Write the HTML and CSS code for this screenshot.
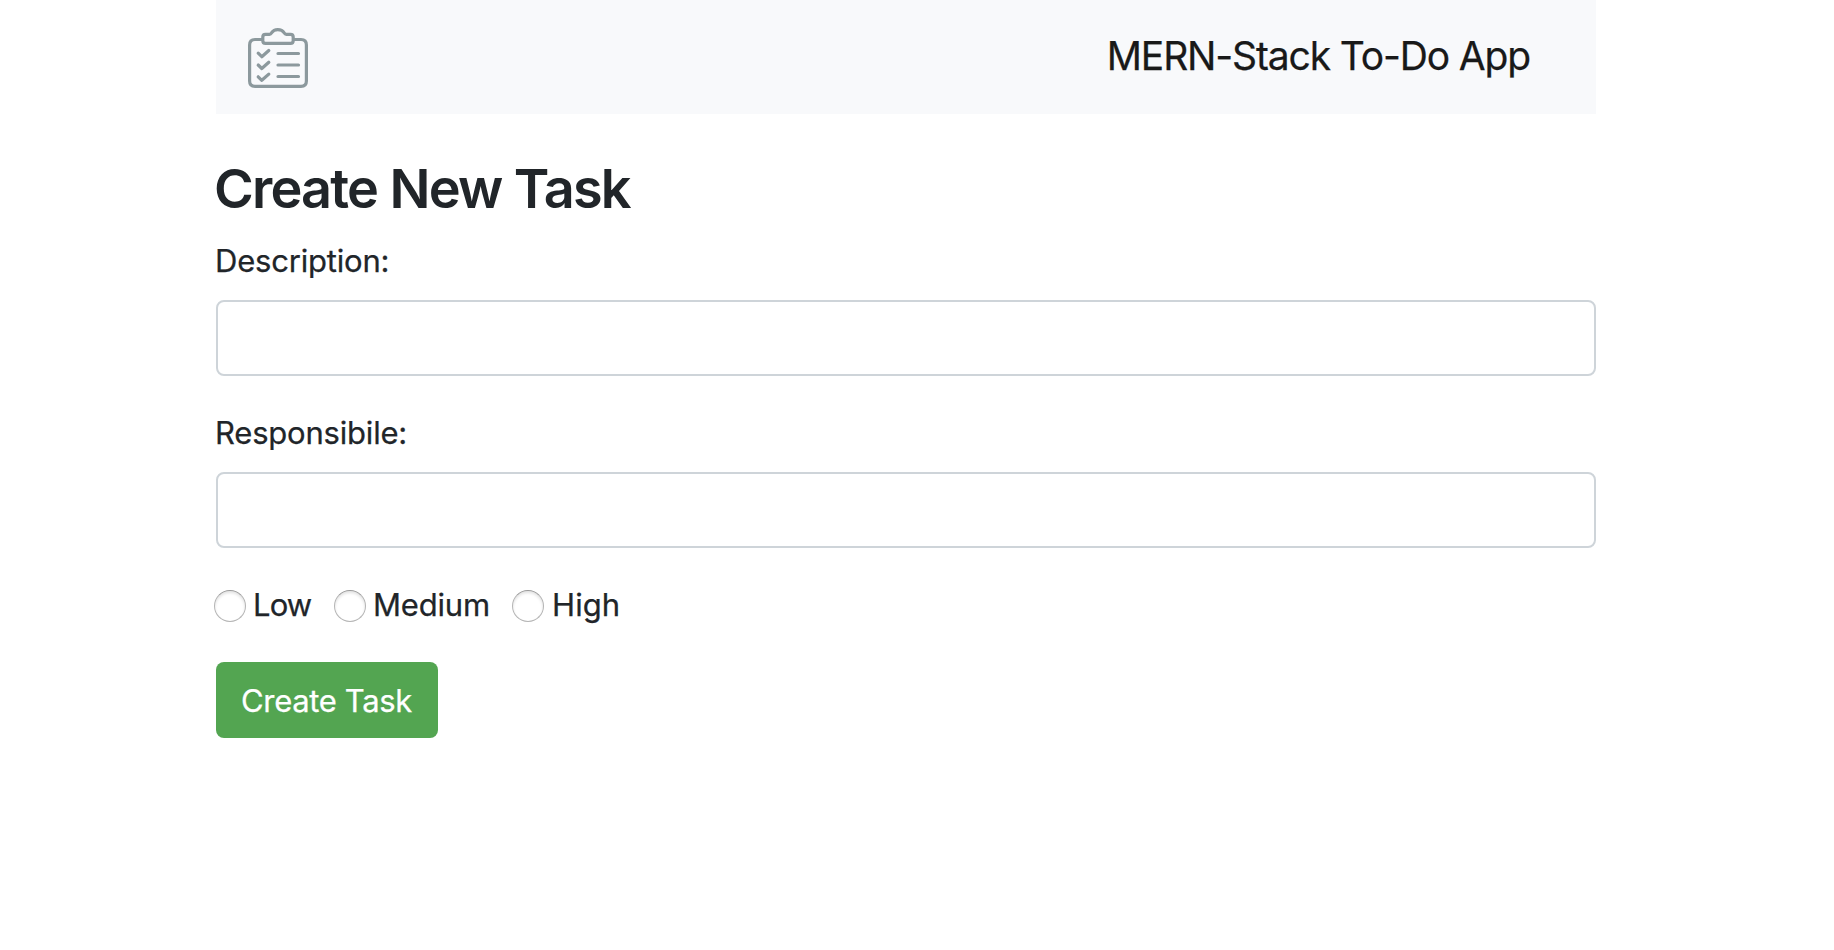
FILE: index.html
```html
<!DOCTYPE html>
<html lang="en">
<head>
<meta charset="utf-8">
<title>MERN-Stack To-Do App</title>
<link rel="stylesheet" href="styles.css">
</head>
<body>
<div class="container">
  <nav class="navbar">
    <svg class="logo" viewBox="0 0 60 60" fill="none" stroke="#8c999d" stroke-width="3.2" stroke-linecap="round" stroke-linejoin="round">
      <path d="M14 11.500H7Q1.600 11.500 1.600 17V53Q1.600 58.400 7 58.400H53Q58.400 58.400 58.400 53V17Q58.400 11.500 53 11.500H46"/>
      <path d="M17.500 6.300H21.500C23 6.300 23.200 5.500 23.700 4.700C24.900 2.700 26.800 1.600 29.800 1.600S34.900 2.700 36.100 4.700C36.600 5.500 36.800 6.300 38.300 6.300H42.500Q45.200 6.300 45.200 9V12.700Q45.200 15.300 42.500 15.300H17.500Q14.800 15.300 14.800 12.700V9Q14.800 6.300 17.500 6.300Z"/>
      <path d="M10.200 25.200L13.800 28.700L20.800 22.500M10.200 37L13.800 40.500L20.800 34.300M10.200 48.800L13.800 52.300L20.800 46.100"/>
      <path d="M30 25.500H50.500M30 37H50.500M30 48.500H50.500"/>
    </svg>
    <a class="brand">MERN-Stack To-Do App</a>
  </nav>
  <h3 class="title">Create New Task</h3>
  <form>
    <div class="form-group">
      <label class="label" for="description">Description:</label>
      <input class="control" id="description" type="text">
    </div>
    <div class="form-group">
      <label class="label" for="responsible">Responsibile:</label>
      <input class="control" id="responsible" type="text">
    </div>
    <div class="radios">
      <label class="radio low"><input class="dot" type="radio" name="priority"><span>Low</span></label>
      <label class="radio medium"><input class="dot" type="radio" name="priority"><span>Medium</span></label>
      <label class="radio high"><input class="dot" type="radio" name="priority"><span>High</span></label>
    </div>
    <button class="submit" type="button">Create Task</button>
  </form>
</div>
</body>
</html>
```
FILE: styles.css
```css
* { box-sizing: border-box; }
body {
  margin: 0;
  background: #fff;
  color: #212529;
  font-family: Inter, "Liberation Sans", sans-serif;
  font-size: 31px;
  line-height: 48px;
  letter-spacing: -0.2px;
  -webkit-text-stroke: 0.25px currentColor;
}
.container { width: 1380px; margin-left: 216px; }
.navbar {
  display: flex;
  justify-content: space-between;
  align-items: flex-start;
  height: 114px;
  padding: 28px 66px 0 32px;
  background: #f8f9fb;
}
.logo { width: 60px; height: 60px; }
.brand {
  color: #191919;
  font-size: 39px;
  line-height: 56px;
  letter-spacing: -1.15px;
}
.title {
  margin: 0 0 13px -2px;
  padding-top: 41px;
  font-size: 54px;
  font-weight: 600;
  line-height: 68px;
  letter-spacing: -1.8px;
  word-spacing: 0.5px;
  -webkit-text-stroke: 0;
}
.form-group { margin-bottom: 32px; }
.label {
  display: block;
  height: 48px;
  margin: 0 0 16px -1px;
  padding-top: 1px;
}
.control {
  display: block;
  width: 100%;
  height: 76px;
  padding: 12px 24px;
  border: 2px solid #ced4d9;
  border-radius: 8px;
  background: #fff;
  font: inherit;
}
.radios { display: flex; height: 50px; margin-left: -2px; margin-bottom: 32px; }
.radio { display: flex; gap: 7px; height: 48px; padding-top: 1px; }
.low { width: 120px; letter-spacing: -0.9px; }
.medium { width: 178px; }
.high { gap: 8px; letter-spacing: 0.1px; }
.dot {
  appearance: none;
  flex: none;
  width: 32px;
  height: 32px;
  margin: 9px 0 0;
  border: 1px solid #b5b5b5;
  border-top-color: #999;
  border-radius: 50%;
  background: #fff;
  box-shadow: inset 0 2px 3px #e2e2e2;
}
.submit {
  display: block;
  width: 222px;
  height: 76px;
  padding: 2px 1px 0 0;
  border: 0;
  border-radius: 8px;
  background: #53a551;
  color: #fff;
  font: inherit;
  letter-spacing: -0.35px;
}
```
